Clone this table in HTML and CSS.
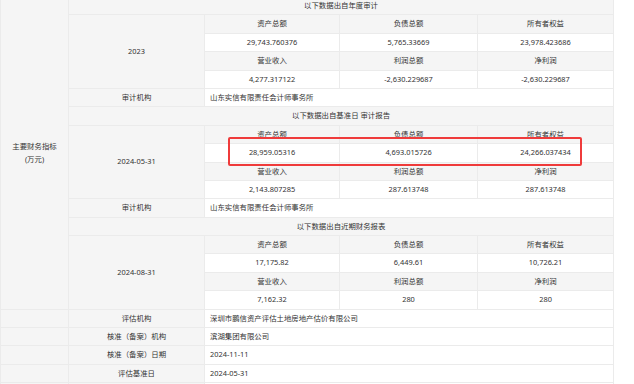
FILE: index.html
```html
<!DOCTYPE html>
<html lang="zh">
<head>
<meta charset="utf-8">
<link rel="stylesheet" href="styles.css">
</head>
<body>
<div class="wrap">
<table class="fin">
  <colgroup>
    <col class="c1"><col class="c2"><col class="c3"><col class="c4"><col class="c5">
  </colgroup>
  <tbody>
    <tr>
      <td class="g side" rowspan="17">主要财务指标<br>(万元)</td>
      <td class="g title" colspan="4">以下数据出自年度审计</td>
    </tr>
    <tr><td class="g" rowspan="4">2023</td><td class="g">资产总额</td><td class="g">负债总额</td><td class="g">所有者权益</td></tr>
    <tr><td>29,743.760376</td><td>5,765.33669</td><td>23,978.423686</td></tr>
    <tr><td class="g">营业收入</td><td class="g">利润总额</td><td class="g">净利润</td></tr>
    <tr><td>4,277.317122</td><td>-2,630.229687</td><td>-2,630.229687</td></tr>
    <tr><td class="g">审计机构</td><td class="left" colspan="3">山东实信有限责任会计师事务所</td></tr>

    <tr><td class="g title" colspan="4">以下数据出自基准日 审计报告</td></tr>
    <tr><td class="g" rowspan="4">2024-05-31</td><td class="g">资产总额</td><td class="g">负债总额</td><td class="g">所有者权益</td></tr>
    <tr><td>28,959.05316</td><td>4,693.015726</td><td>24,266.037434</td></tr>
    <tr><td class="g">营业收入</td><td class="g">利润总额</td><td class="g">净利润</td></tr>
    <tr><td>2,143.807285</td><td>287.613748</td><td>287.613748</td></tr>
    <tr><td class="g">审计机构</td><td class="left" colspan="3">山东实信有限责任会计师事务所</td></tr>

    <tr><td class="g title" colspan="4">以下数据出自近期财务报表</td></tr>
    <tr><td class="g" rowspan="4">2024-08-31</td><td class="g">资产总额</td><td class="g">负债总额</td><td class="g">所有者权益</td></tr>
    <tr><td>17,175.82</td><td>6,449.61</td><td>10,726.21</td></tr>
    <tr><td class="g">营业收入</td><td class="g">利润总额</td><td class="g">净利润</td></tr>
    <tr><td>7,162.32</td><td>280</td><td>280</td></tr>

    <tr><td class="g"></td><td class="g">评估机构</td><td class="left" colspan="3">深圳市鹏信资产评估土地房地产估价有限公司</td></tr>
    <tr><td class="g"></td><td class="g">核准（备案）机构</td><td class="left" colspan="3">滨湖集团有限公司</td></tr>
    <tr><td class="g"></td><td class="g">核准（备案）日期</td><td class="left" colspan="3">2024-11-11</td></tr>
    <tr><td class="g"></td><td class="g">评估基准日</td><td class="left" colspan="3">2024-05-31</td></tr>
    <tr><td class="g"></td><td class="g"></td><td class="left" colspan="3"></td></tr>
  </tbody>
</table>
</div>
<div class="mark"></div>
</body>
</html>
```

FILE: styles.css
```css
html, body {
  margin: 0;
  padding: 0;
  background: #ffffff;
}
body {
  font-family: "Noto Sans", "Noto Sans CJK SC", sans-serif;
  font-size: 7.4px;
  color: #333333;
  overflow: hidden;
}
.wrap {
  margin-top: -4px;
}
.fin {
  table-layout: fixed;
  border-collapse: collapse;
  width: 613px;
}
.c1 { width: 68px; }
.c2 { width: 136px; }
.c3 { width: 135px; }
.c4 { width: 138px; }
.c5 { width: 136px; }
.fin tr {
  height: 18.4px;
}
.fin td {
  height: 18.4px;
  padding: 0 5px;
  border: 1px solid #ebebeb;
  text-align: center;
  vertical-align: middle;
  background: #ffffff;
  line-height: 1;
  white-space: nowrap;
  box-sizing: border-box;
}
.fin td.g {
  background: #f5f5f5;
}
.fin td.side {
  line-height: 13px;
}
.fin td.left {
  text-align: left;
}
.mark {
  position: absolute;
  left: 228px;
  top: 137px;
  width: 354px;
  height: 29px;
  box-sizing: border-box;
  border: 2px solid #ef3b3b;
  border-radius: 2px;
}
```
